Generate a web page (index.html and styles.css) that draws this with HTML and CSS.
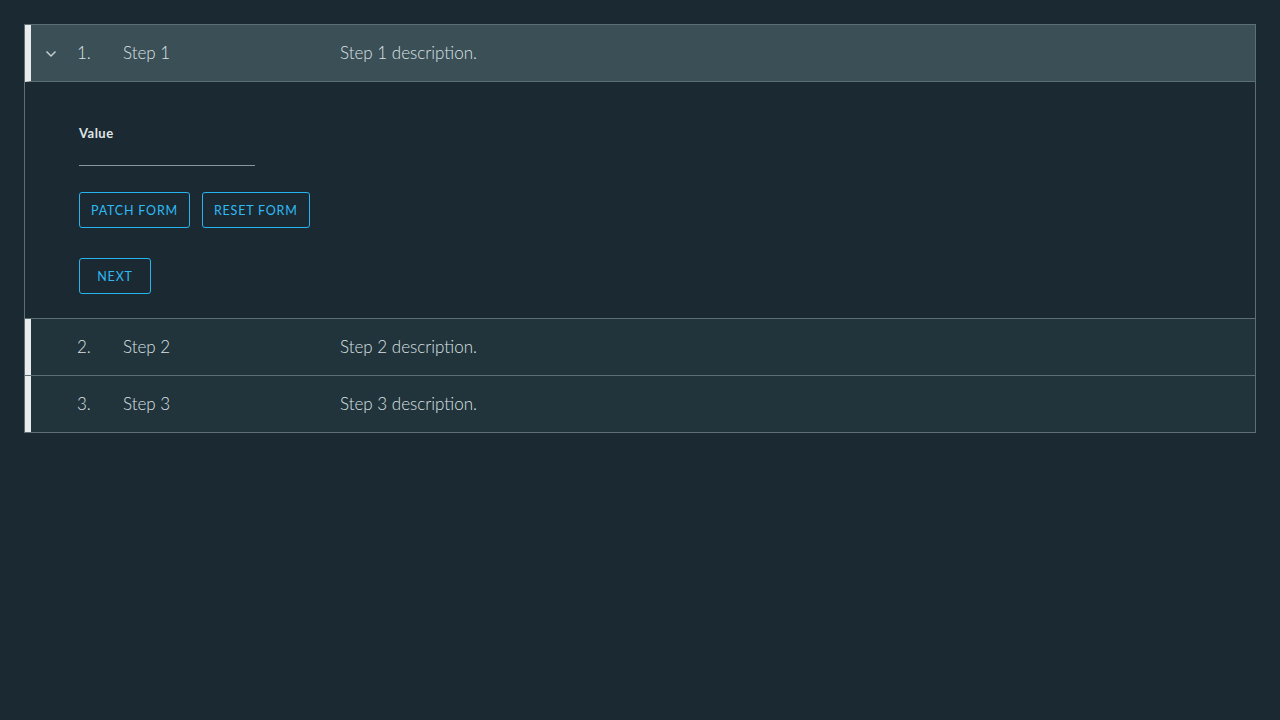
FILE: index.html
```html
<!DOCTYPE html>
<html>
<head>
<meta charset="utf-8">
<link rel="stylesheet" href="styles.css">
</head>
<body>
<div class="stepper">
  <div class="step step-open">
    <div class="step-header">
      <span class="chev"><svg width="12" height="8" viewBox="0 0 12 8"><path d="M1.5 1.5 L6 6 L10.5 1.5" fill="none" stroke="#c5ced2" stroke-width="1.5"/></svg></span>
      <span class="num">1.</span>
      <span class="title">Step 1</span>
      <span class="desc">Step 1 description.</span>
    </div>
    <div class="step-content">
      <label class="field-label">Value</label>
      <div class="input-line"></div>
      <div class="btn-row">
        <button class="btn">PATCH FORM</button>
        <button class="btn">RESET FORM</button>
      </div>
      <div class="btn-row next-row">
        <button class="btn btn-next">NEXT</button>
      </div>
    </div>
  </div>
  <div class="step">
    <div class="step-header">
      <span class="chev"></span>
      <span class="num">2.</span>
      <span class="title">Step 2</span>
      <span class="desc">Step 2 description.</span>
    </div>
  </div>
  <div class="step">
    <div class="step-header">
      <span class="chev"></span>
      <span class="num">3.</span>
      <span class="title">Step 3</span>
      <span class="desc">Step 3 description.</span>
    </div>
  </div>
</div>
</body>
</html>
```
FILE: styles.css
```css
* { box-sizing: border-box; }
html, body { margin: 0; padding: 0; }
body {
  background: #1b2a32;
  font-family: "Lato", "Noto Sans", sans-serif;
  color: #c9d1d5;
  padding: 24px;
}
.stepper {
  border: 1px solid #5e6e75;
  border-bottom: none;
}
.step { border-bottom: 1px solid #5e6e75; }
.step-header {
  display: flex;
  align-items: center;
  height: 56px;
  padding-bottom: 2px;
  background: #21333b;
  border-left: 6px solid #e9ecec;
  font-size: 17px;
  font-weight: 300;
  color: #dbe1e4;
}
.step-open .step-header {
  background: #3b4f56;
  border-bottom: 1px solid #5e6e75;
  height: 57px;
}
.chev {
  width: 46px;
  display: flex;
  justify-content: flex-start;
  padding-left: 14px;
  padding-top: 4px;
}
.num { width: 46px; }
.title { width: 217px; }
.desc { flex: 1; }
.step-content {
  padding: 43px 54px 24px 54px;
}
.field-label {
  display: block;
  font-size: 13px;
  font-weight: 700;
  letter-spacing: 0.5px;
  color: #dfe4e6;
  line-height: 16px;
}
.input-line {
  width: 176px;
  height: 25px;
  border-bottom: 1px solid #8a979c;
}
.btn-row {
  display: flex;
  gap: 12px;
  margin-top: 26px;
}
.next-row { margin-top: 30px; }
.btn {
  height: 36px;
  padding: 0 11px;
  background: transparent;
  border: 1px solid #27b4ef;
  border-radius: 3px;
  color: #30b9f2;
  font-family: "Lato", "Noto Sans", sans-serif;
  font-size: 12.5px;
  font-weight: 400;
  letter-spacing: 0.8px;
}
.btn-next { width: 72px; }
```
